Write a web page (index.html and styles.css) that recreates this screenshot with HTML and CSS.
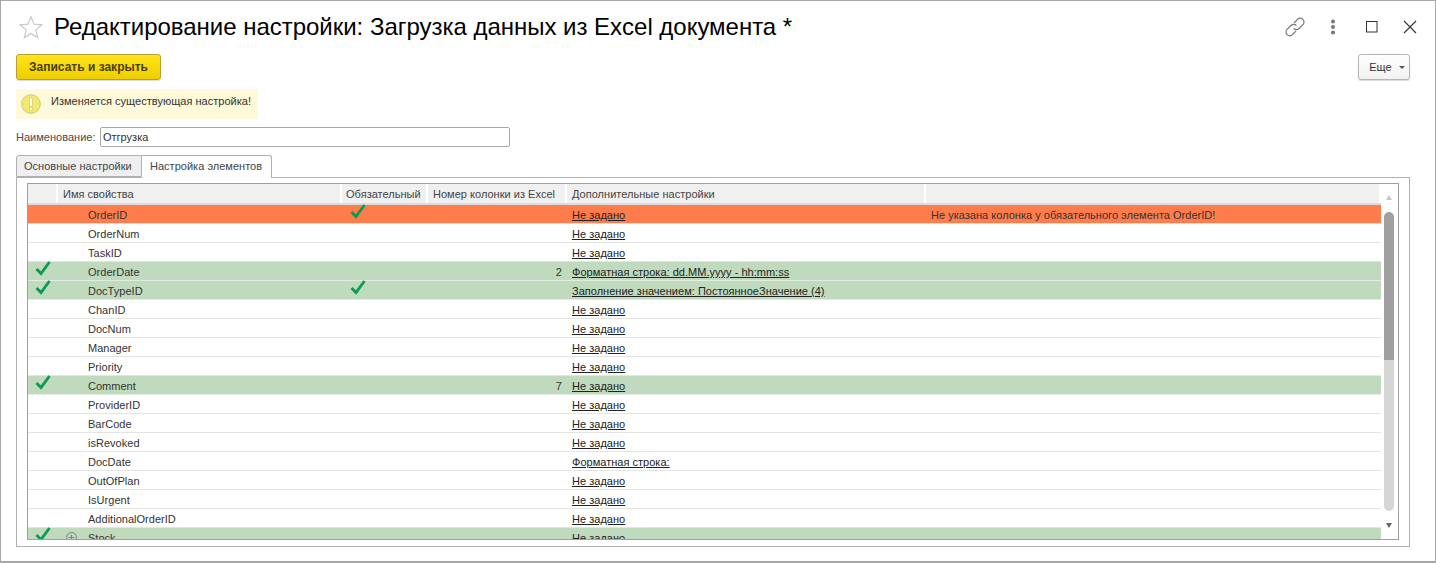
FILE: index.html
```html
<!DOCTYPE html>
<html lang="ru">
<head>
<meta charset="utf-8">
<title>Редактирование настройки</title>
<link rel="stylesheet" href="styles.css">
</head>
<body>
<div class="window">
  <header class="titlebar">
    <svg class="star" width="24" height="24" viewBox="0 0 24 24"><path d="M12 1.800l3 7.400 7.900.6-6.100 5.100 1.900 7.700L12 18.400l-6.700 4.200 1.900-7.700L1.100 9.800 9 9.200z" fill="none" stroke="#c9c9c9" stroke-width="1.200"/></svg>
    <h1 class="title">Редактирование настройки: Загрузка данных из Excel документа *</h1>
    <div class="winbtns">
      <svg class="ico-link" width="22" height="22" viewBox="0 0 22 22" fill="none" stroke="#777" stroke-width="1.200"><path d="M10 7l3.600-3.700a3.700 3.700 0 0 1 5.300 5.300l-3.900 3.900a3.700 3.700 0 0 1-5.300 0"/><path d="M12 15l-3.600 3.700a3.700 3.700 0 0 1-5.300-5.300l3.900-3.900a3.700 3.700 0 0 1 5.300 0"/></svg>
      <svg class="ico-more" width="6" height="16" viewBox="0 0 6 16" fill="#777"><circle cx="3" cy="2.500" r="2"/><circle cx="3" cy="8" r="2"/><circle cx="3" cy="13.500" r="2"/></svg>
      <svg class="ico-max" width="12" height="12" viewBox="0 0 12 12" fill="none" stroke="#333"><rect x=".5" y=".5" width="10.500" height="10.500"/></svg>
      <svg class="ico-close" width="14" height="14" viewBox="0 0 14 14" fill="none" stroke="#333" stroke-width="1.100"><path d="M1 1l12 12M13 1L1 13"/></svg>
    </div>
  </header>
  <div class="toolbar">
    <button class="btn-primary">Записать и закрыть</button>
    <button class="btn-more">Еще <span class="caret"></span></button>
  </div>
  <div class="notice">
    <svg class="notice-ico" width="20" height="20" viewBox="0 0 20 20"><circle cx="10" cy="10" r="9.300" fill="#f3e96a" stroke="#c9c58a"/><rect x="8.700" y="4" width="2.600" height="8" fill="#fff" stroke="#b5b06a" stroke-width=".4"/><rect x="8.700" y="13.500" width="2.600" height="2.600" fill="#fff" stroke="#b5b06a" stroke-width=".4"/></svg>
    <span>Изменяется существующая настройка!</span>
  </div>
  <div class="field">
    <label class="field-label">Наименование:</label>
    <input class="field-input" value="Отгрузка">
  </div>
  <div class="tabs">
    <div class="tab">Основные настройки</div>
    <div class="tab tab-active">Настройка элементов</div>
  </div>
  <section class="panel">
    <div class="grid">
      <div class="grid-main">
        <div class="row head">
          <div class="c c0"></div>
          <div class="c c1">Имя свойства</div>
          <div class="c c2">Обязательный</div>
          <div class="c c3">Номер колонки из Excel</div>
          <div class="c c4">Дополнительные настройки</div>
          <div class="c c5"></div>
        </div>
        <div class="row err"><div class="c c0"></div><div class="c c1 ind">OrderID</div><div class="c c2"><svg class="chk" width="16" height="15" viewBox="0 0 16 15"><use href="#check"/></svg></div><div class="c c3"></div><div class="c c4"><u>Не задано</u></div><div class="c c5">Не указана колонка у обязательного элемента OrderID!</div></div>
        <div class="row"><div class="c c0"></div><div class="c c1 ind">OrderNum</div><div class="c c2"></div><div class="c c3"></div><div class="c c4"><u>Не задано</u></div><div class="c c5"></div></div>
        <div class="row"><div class="c c0"></div><div class="c c1 ind">TaskID</div><div class="c c2"></div><div class="c c3"></div><div class="c c4"><u>Не задано</u></div><div class="c c5"></div></div>
        <div class="row ok"><div class="c c0"><svg class="chk" width="16" height="15" viewBox="0 0 16 15"><use href="#check"/></svg></div><div class="c c1 ind">OrderDate</div><div class="c c2"></div><div class="c c3">2</div><div class="c c4"><u>Форматная строка: dd.MM.yyyy - hh:mm:ss</u></div><div class="c c5"></div></div>
        <div class="row ok"><div class="c c0"><svg class="chk" width="16" height="15" viewBox="0 0 16 15"><use href="#check"/></svg></div><div class="c c1 ind">DocTypeID</div><div class="c c2"><svg class="chk" width="16" height="15" viewBox="0 0 16 15"><use href="#check"/></svg></div><div class="c c3"></div><div class="c c4"><u>Заполнение значением: ПостоянноеЗначение (4)</u></div><div class="c c5"></div></div>
        <div class="row"><div class="c c0"></div><div class="c c1 ind">ChanID</div><div class="c c2"></div><div class="c c3"></div><div class="c c4"><u>Не задано</u></div><div class="c c5"></div></div>
        <div class="row"><div class="c c0"></div><div class="c c1 ind">DocNum</div><div class="c c2"></div><div class="c c3"></div><div class="c c4"><u>Не задано</u></div><div class="c c5"></div></div>
        <div class="row"><div class="c c0"></div><div class="c c1 ind">Manager</div><div class="c c2"></div><div class="c c3"></div><div class="c c4"><u>Не задано</u></div><div class="c c5"></div></div>
        <div class="row"><div class="c c0"></div><div class="c c1 ind">Priority</div><div class="c c2"></div><div class="c c3"></div><div class="c c4"><u>Не задано</u></div><div class="c c5"></div></div>
        <div class="row ok"><div class="c c0"><svg class="chk" width="16" height="15" viewBox="0 0 16 15"><use href="#check"/></svg></div><div class="c c1 ind">Comment</div><div class="c c2"></div><div class="c c3">7</div><div class="c c4"><u>Не задано</u></div><div class="c c5"></div></div>
        <div class="row"><div class="c c0"></div><div class="c c1 ind">ProviderID</div><div class="c c2"></div><div class="c c3"></div><div class="c c4"><u>Не задано</u></div><div class="c c5"></div></div>
        <div class="row"><div class="c c0"></div><div class="c c1 ind">BarCode</div><div class="c c2"></div><div class="c c3"></div><div class="c c4"><u>Не задано</u></div><div class="c c5"></div></div>
        <div class="row"><div class="c c0"></div><div class="c c1 ind">isRevoked</div><div class="c c2"></div><div class="c c3"></div><div class="c c4"><u>Не задано</u></div><div class="c c5"></div></div>
        <div class="row"><div class="c c0"></div><div class="c c1 ind">DocDate</div><div class="c c2"></div><div class="c c3"></div><div class="c c4"><u>Форматная строка:</u></div><div class="c c5"></div></div>
        <div class="row"><div class="c c0"></div><div class="c c1 ind">OutOfPlan</div><div class="c c2"></div><div class="c c3"></div><div class="c c4"><u>Не задано</u></div><div class="c c5"></div></div>
        <div class="row"><div class="c c0"></div><div class="c c1 ind">IsUrgent</div><div class="c c2"></div><div class="c c3"></div><div class="c c4"><u>Не задано</u></div><div class="c c5"></div></div>
        <div class="row"><div class="c c0"></div><div class="c c1 ind">AdditionalOrderID</div><div class="c c2"></div><div class="c c3"></div><div class="c c4"><u>Не задано</u></div><div class="c c5"></div></div>
        <div class="row ok"><div class="c c0"><svg class="chk" width="16" height="15" viewBox="0 0 16 15"><use href="#check"/></svg></div><div class="c c1 ind tree"><svg class="plus" width="11" height="11" viewBox="0 0 11 11" fill="none" stroke="#808080"><circle cx="5.500" cy="5.500" r="5"/><path d="M2.500 5.500h6M5.500 2.500v6"/></svg>Stock</div><div class="c c2"></div><div class="c c3"></div><div class="c c4"><u>Не задано</u></div><div class="c c5"></div></div>
      </div>
      <div class="scrollbar">
        <span class="arrow-up"></span>
        <div class="track"><div class="thumb"></div><div class="thumb-rest"></div></div>
        <span class="arrow-down"></span>
      </div>
    </div>
  </section>
</div>
<svg class="defs" width="0" height="0"><defs><path id="check" d="M1.500 8l4.500 4.500L14.500 1" fill="none" stroke="#0b9a52" stroke-width="2.800"/></defs></svg>
</body>
</html>
```
FILE: styles.css
```css
* { box-sizing: border-box; }
html, body { margin: 0; height: 100%; }
body { background: #fff; font: 11px/15px "Liberation Sans", Arial, sans-serif; letter-spacing: .02px; color: #333; overflow: hidden; }
.defs { position: absolute; }
.window { height: 563px; width: 1436px; border: 1px solid #a8a8a8; border-bottom-width: 2px; padding: 0 25px 0 15px; display: flex; flex-direction: column; }
.titlebar { height: 53px; display: flex; align-items: center; margin-right: -25px; padding-bottom: 1px; }
.star { margin: 0 0 0 3px; flex: none; }
.title { margin: 0 0 0 11px; font-weight: 400; font-size: 24px; line-height: 28px; letter-spacing: -.02px; color: #000; flex: 1; white-space: nowrap; }
.winbtns { display: flex; align-items: center; padding-right: 18px; }
.ico-link { margin-right: 24px; }
.ico-more { margin-right: 30px; }
.ico-max { margin-right: 25px; }
.toolbar { display: flex; justify-content: space-between; align-items: flex-start; height: 35px; }
.btn-primary { width: 145px; height: 26px; padding: 0; font: 700 12px "Liberation Sans", Arial, sans-serif; color: #4a3f00; background: linear-gradient(#ffe41a, #efce00); border: 1px solid #b8a030; border-radius: 3px; box-shadow: 0 1px 1px rgba(0,0,0,.15); }
.btn-more { width: 52px; height: 26px; padding: 0 0 0 6px; font: 11px "Liberation Sans", Arial, sans-serif; color: #333; background: linear-gradient(#fff, #f2f2f2); border: 1px solid #b4b4b4; border-radius: 3px; box-shadow: 0 1px 1px rgba(0,0,0,.15); }
.caret { display: inline-block; width: 0; height: 0; margin-left: 4px; border: 3px solid transparent; border-top: 3px solid #555; border-bottom: 0; vertical-align: 2px; }
.notice { width: 242px; height: 30px; background: #fdf9d9; display: flex; align-items: flex-start; gap: 10px; padding: 5px 0 0 5px; }
.notice-ico { flex: none; }
.notice span { white-space: nowrap; }
.field { display: flex; align-items: center; margin-top: 8px; height: 20px; }
.field-label { width: 84px; flex: none; color: #4a4a4a; white-space: nowrap; }
.field-input { width: 410px; height: 20px; border: 1px solid #a8a8a8; border-radius: 2px; padding: 0 2px; font: 11px "Liberation Sans", Arial, sans-serif; color: #333; outline: 0; }
.tabs { display: flex; height: 23px; margin-top: 8px; position: relative; z-index: 1; }
.tab { width: 126px; height: 22px; background: #efefef; border: 1px solid #b0b0b0; border-radius: 3px 0 0 0; padding: 3px 0 0 7px; white-space: nowrap; color: #444; }
.tab-active { width: 130px; height: 23px; background: #fff; border-bottom: 0; border-left-width: 0; border-radius: 0 3px 0 0; padding-left: 8px; }
.panel { width: 1394px; height: 370px; margin-top: -1px; border: 1px solid #b0b0b0; padding: 5px 10px 6px 10px; }
.grid { height: 357px; border: 1px solid #a0a0a0; display: flex; overflow: hidden; background: #fff; }
.grid-main { width: 1353px; flex: none; overflow: hidden; }
.row { display: flex; height: 19px; border-bottom: 1px solid #e4e4e4; line-height: 20px; }
.head { height: 21px; background: #f0f0f0; border-bottom: 2px solid #dcdcdc; line-height: 20px; color: #444; }
.head .c { border-right: 2px solid #fff; height: 19px; }
.head .c2 { padding-left: 4px; }
.head .c3 { text-align: left; }
.err { background: #ff7d4d; }
.ok { background: #c0dabd; border-bottom-color: #e4ece2; }
.c { flex: none; padding: 0 5px; white-space: nowrap; position: relative; }
.c0 { width: 30px; }
.c1 { width: 284px; }
.c2 { width: 86px; }
.c3 { width: 139px; text-align: right; }
.c4 { width: 359px; }
.c5 { width: 455px; }
.ind { padding-left: 30px; }
.plus { position: absolute; left: 8px; top: 4px; }
.chk { position: absolute; left: 7px; top: -1px; }
.c2 .chk { left: 8px; }
.c4 u { color: #222; }
.scrollbar { flex: 1; display: flex; flex-direction: column; align-items: center; padding: 11px 1px 0 0; }
.arrow-up { width: 0; height: 0; border: 3px solid transparent; border-top: 0; border-bottom: 5px solid #c8c8c8; }
.track { width: 10px; flex: none; margin-top: 12px; height: 299px; display: flex; flex-direction: column; }
.thumb { height: 148px; background: #a0a0a0; border-radius: 5px 5px 0 0; }
.thumb-rest { flex: 1; background: #d6d6d6; border-radius: 0 0 5px 5px; }
.arrow-down { width: 0; height: 0; margin-top: 12px; border: 3px solid transparent; border-bottom: 0; border-top: 5px solid #666; }
```
